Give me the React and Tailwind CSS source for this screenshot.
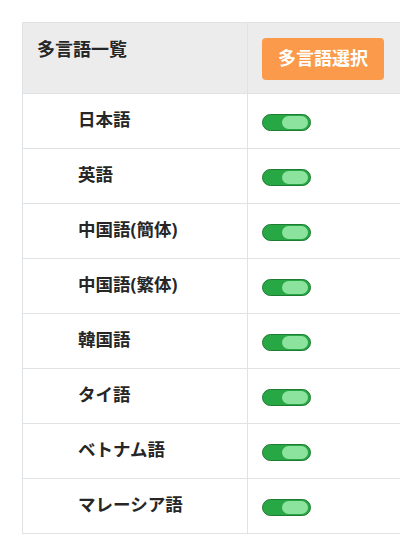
import React from "react";

const languages = [
  "日本語",
  "英語",
  "中国語(簡体)",
  "中国語(繁体)",
  "韓国語",
  "タイ語",
  "ベトナム語",
  "マレーシア語",
];

function Toggle() {
  return (
    <span className="relative inline-block w-[49px] h-[17px] rounded-full bg-[#28a745] border border-[#1f7a33] align-middle">
      <span className="absolute right-[2px] top-[1px] w-[26px] h-[13px] rounded-full bg-[#8be39d]" />
    </span>
  );
}

export default function App() {
  return (
    <div
      className="w-[400px] h-[536px] overflow-hidden bg-white pt-[22px] pl-[22px] text-[#262626]"
      style={{ fontFamily: '"Noto Sans", "Noto Sans CJK JP", sans-serif' }}
    >
      <table className="w-[420px] border-collapse">
        <thead>
          <tr className="bg-[#ececec]">
            <th className="w-[225px] border border-[#e0e3e6] p-[15px] pt-[13px] pl-[14px] align-top text-left text-[18px] font-bold leading-[26px]">
              多言語一覧
            </th>
            <th className="border border-[#e0e3e6] p-[15px] pl-[14px] pb-[13px] align-top text-left">
              <button className="h-[42px] w-[122px] rounded-[4px] bg-[#fa9a4a] text-white text-[18px] font-bold leading-none pb-[2px]">
                多言語選択
              </button>
            </th>
          </tr>
        </thead>
        <tbody>
          {languages.map((lang) => (
            <tr key={lang} className="h-[55px]">
              <td className="border border-[#e0e3e6] pl-[55px] pb-[3px] text-[17.5px] font-bold align-middle">
                {lang}
              </td>
              <td className="border border-[#e0e3e6] pl-[14px] pb-[1px] align-middle">
                <Toggle />
              </td>
            </tr>
          ))}
        </tbody>
      </table>
    </div>
  );
}
